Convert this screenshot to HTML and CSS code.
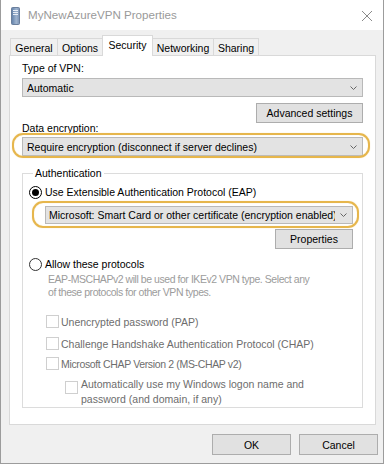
FILE: index.html
```html
<!DOCTYPE html>
<html>
<head>
<meta charset="utf-8">
<link rel="stylesheet" href="styles.css">
</head>
<body>
<div class="window">
  <div class="titlebar">
    <svg class="app-icon" width="9" height="18" viewBox="0 0 9 18">
      <defs>
        <linearGradient id="g" x1="0" y1="0" x2="1" y2="0">
          <stop offset="0" stop-color="#5f7fa8"/>
          <stop offset="0.6" stop-color="#9fb4cf"/>
          <stop offset="1" stop-color="#7a92b4"/>
        </linearGradient>
      </defs>
      <rect x="0.5" y="0.5" width="8" height="17" rx="1" fill="url(#g)" stroke="#6a7f9c" stroke-width="1"/>
      <line x1="2" y1="3.5" x2="7" y2="3.5" stroke="#e8eef6" stroke-width="1"/>
      <line x1="2" y1="5.5" x2="7" y2="5.5" stroke="#e8eef6" stroke-width="1"/>
      <line x1="2" y1="7.5" x2="7" y2="7.5" stroke="#e8eef6" stroke-width="1"/>
    </svg>
    <span class="title">MyNewAzureVPN Properties</span>
    <svg class="close" width="12" height="12" viewBox="0 0 12 12">
      <path d="M1 1 L11 11 M11 1 L1 11" stroke="#8a8a8a" stroke-width="1" fill="none"/>
    </svg>
  </div>

  <div class="body">
    <div class="tabs">
      <div class="tab t-general">General</div>
      <div class="tab t-options">Options</div>
      <div class="tab selected t-security">Security</div>
      <div class="tab t-networking">Networking</div>
      <div class="tab t-sharing">Sharing</div>
    </div>

    <div class="panel">
      <div class="label l-type">Type of VPN:</div>
      <div class="combo c-type">
        <span class="combo-text">Automatic</span>
        <svg class="chev" width="7" height="4" viewBox="0 0 7 4"><path d="M0.5 0.5 L3.5 3.5 L6.5 0.5" stroke="#666" fill="none"/></svg>
      </div>
      <div class="btn-row adv-row"><div class="btn adv">Advanced settings</div></div>
      <div class="label l-enc">Data encryption:</div>
      <div class="combo c-enc highlight">
        <span class="combo-text">Require encryption (disconnect if server declines)</span>
        <svg class="chev" width="7" height="4" viewBox="0 0 7 4"><path d="M0.5 0.5 L3.5 3.5 L6.5 0.5" stroke="#666" fill="none"/></svg>
      </div>

      <fieldset class="group">
        <legend>Authentication</legend>
        <div class="opt r-eap"><span class="radio checked"></span><span>Use Extensible Authentication Protocol (EAP)</span></div>
        <div class="combo c-eap highlight">
          <span class="combo-text">Microsoft: Smart Card or other certificate (encryption enabled)</span>
          <svg class="chev" width="7" height="4" viewBox="0 0 7 4"><path d="M0.5 0.5 L3.5 3.5 L6.5 0.5" stroke="#666" fill="none"/></svg>
        </div>
        <div class="btn-row props-row"><div class="btn props">Properties</div></div>
        <div class="opt r-allow"><span class="radio"></span><span>Allow these protocols</span></div>
        <p class="note">EAP-MSCHAPv2 will be used for IKEv2 VPN type. Select any<br>of these protocols for other VPN types.</p>
        <div class="opt chk c-pap"><span class="check"></span><span>Unencrypted password (PAP)</span></div>
        <div class="opt chk c-chap"><span class="check"></span><span>Challenge Handshake Authentication Protocol (CHAP)</span></div>
        <div class="opt chk c-ms"><span class="check"></span><span class="tight">Microsoft CHAP Version 2 (MS-CHAP v2)</span></div>
        <div class="opt chk c-auto"><span class="check"></span><span>Automatically use my Windows logon name and<br>password (and domain, if any)</span></div>
      </fieldset>
    </div>
  </div>

  <div class="footer">
    <div class="btn ok">OK</div>
    <div class="btn cancel">Cancel</div>
  </div>
</div>
</body>
</html>
```
FILE: styles.css
```css
* { box-sizing: border-box; }
html, body { margin: 0; padding: 0; background: #ffffff; }
body {
  font-family: "Liberation Sans", Arial, sans-serif;
  font-size: 10.5px;
  line-height: 14px;
  color: #000;
}
.window {
  width: 384px;
  height: 464px;
  background: #f0f0f0;
  border: 1px solid #9c9c9c;
  border-top: none;
  display: flex;
  flex-direction: column;
}
.titlebar {
  height: 30px;
  background: #fff;
  display: flex;
  align-items: center;
  padding-left: 10px;
  flex: none;
}
.app-icon { margin-top: 1px; }
.title {
  margin-left: 8px;
  font-size: 11.6px;
  color: #9a9a9a;
}
.close { margin-left: auto; margin-right: 10px; margin-top: 1px; }

.body {
  padding: 0 7px 0 8px;
  flex: none;
}
.tabs {
  display: flex;
  align-items: flex-end;
  height: 21px;
  margin-top: 5px;
  margin-bottom: -1px;
  padding-left: 1px;
  position: relative;
  z-index: 1;
}
.tab {
  height: 17px;
  margin-bottom: 1px;
  border: 1px solid #d9d9d9;
  border-bottom: none;
  background: #f0f0f0;
  display: flex;
  align-items: center;
  justify-content: center;
  padding-top: 1px;
  margin-right: -1px;
}
.tab.selected {
  height: 21px;
  margin-bottom: 0;
  background: #fff;
  padding-top: 0;
  padding-bottom: 2px;
  position: relative;
  z-index: 2;
}
.t-general { width: 48px; }
.t-options { width: 46px; }
.t-security { width: 51px; }
.t-networking { width: 62px; }
.t-sharing { width: 46px; }

.panel {
  background: #fff;
  border: 1px solid #d9d9d9;
  height: 370px;
  padding: 5px 12px 0 12px;
  display: flex;
  flex-direction: column;
}
.label { height: 14px; }
.l-enc { margin-top: -2px; }

.combo {
  height: 19px;
  background: #e3e3e3;
  border: 1px solid #b9b9b9;
  display: flex;
  align-items: center;
  padding: 0 5px 0 4px;
  position: relative;
}
.combo-text {
  flex: 1;
  overflow: hidden;
  white-space: nowrap;
}
.chev { flex: none; margin-left: 5px; }
.c-type { margin-top: 3px; }
.c-enc { margin-top: 2px; }
.highlight::after {
  content: "";
  position: absolute;
  border: 2px solid #e6b64c;
  border-radius: 11px;
  box-shadow: 0 0 1px #f3d799, inset 0 0 1px #f3d799;
  pointer-events: none;
}
.c-enc.highlight::after { top: -5px; bottom: -3px; left: -11px; right: -8px; }
.c-eap.highlight::after { top: -6px; bottom: -5px; left: -14px; right: -7px; }

.btn-row { display: flex; justify-content: flex-end; }
.btn {
  height: 20px;
  background: #e1e1e1;
  border: 1px solid #adadad;
  display: flex;
  align-items: center;
  justify-content: center;
}
.adv-row { margin-top: 6px; }
.adv { width: 107px; }

.group {
  margin: 10px 0 0 0;
  padding: 0 9px 0 6px;
  border: 1px solid #dcdcdc;
  height: 242px;
  min-width: 0;
  display: flex;
  flex-direction: column;
}
.group legend {
  padding: 0 2px;
  margin-left: 4px;
  line-height: 14px;
}
.opt { display: flex; align-items: flex-start; }
.radio {
  width: 13px;
  height: 13px;
  border: 1px solid #333;
  border-radius: 50%;
  margin-right: 3px;
  flex: none;
  background: #fff;
  display: flex;
  align-items: center;
  justify-content: center;
  margin-top: 1px;
}
.radio.checked { border-color: #000; }
.radio.checked::before {
  content: "";
  width: 7px;
  height: 7px;
  border-radius: 50%;
  background: #000;
}
.r-eap { margin-top: 5px; }
.c-eap { margin: 7px 0 0 16px; height: 18px; padding-left: 3px; }
.props-row { margin-top: 5px; }
.props { width: 78px; }
.r-allow { margin-top: 8px; }
.note {
  margin: 2px 0 0 19px;
  color: #9c9c9c;
  line-height: 13px;
  letter-spacing: -0.45px;
}
.check {
  width: 13px;
  height: 13px;
  border: 1px solid #cfcfcf;
  background: #fff;
  flex: none;
  margin-right: 2px;
  margin-top: 0px;
}
.chk { color: #6d6d6d; margin-left: 17px; }
.tight { letter-spacing: -0.35px; }
.c-pap { margin-top: 16px; }
.c-chap { margin-top: 8px; }
.c-ms { margin-top: 6px; }
.c-auto { margin-left: 36px; margin-top: 6px; line-height: 15px; }
.c-auto .check { margin-top: 4px; margin-right: 3px; }

.footer {
  display: flex;
  justify-content: flex-end;
  gap: 8px;
  padding: 9px 5px 0 0;
}
.ok, .cancel { width: 79px; height: 21px; }
```
